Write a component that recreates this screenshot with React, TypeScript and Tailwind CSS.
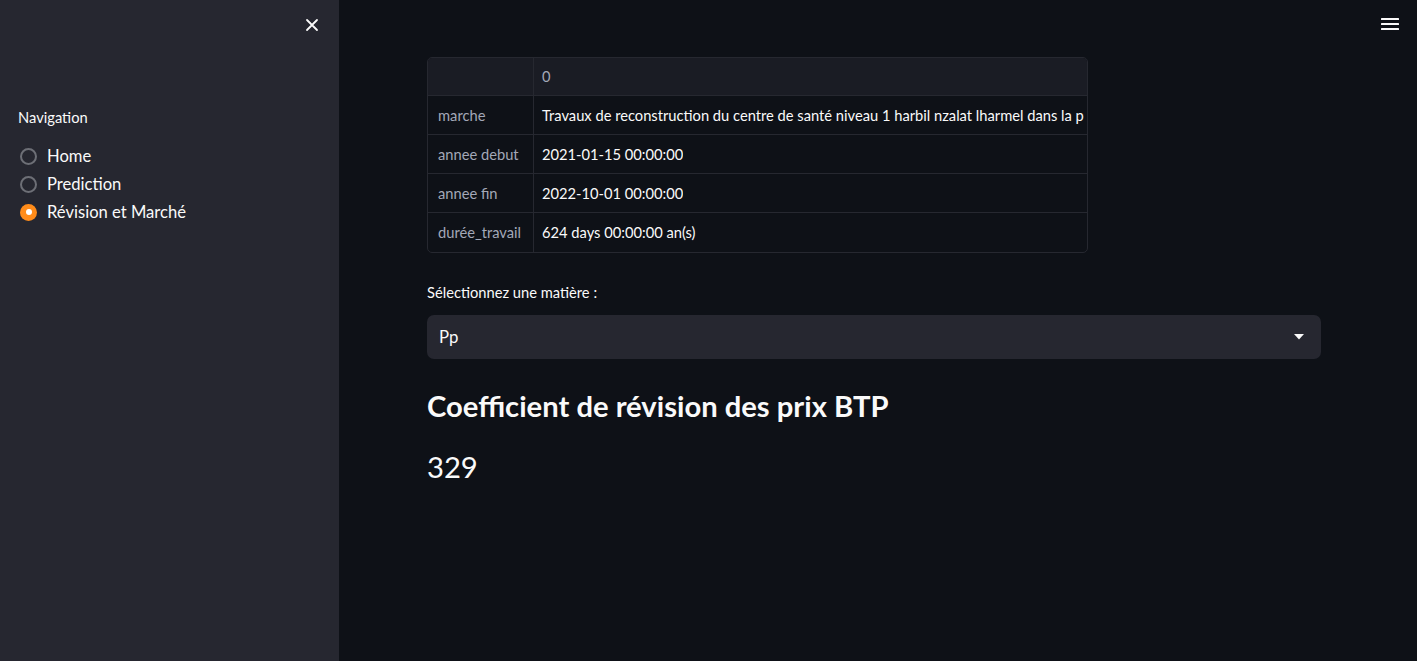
import React from "react";

const font = { fontFamily: '"Source Sans Pro", Lato, "Noto Sans", sans-serif' };

function Radio({ label, selected }: { label: string; selected?: boolean }) {
  return (
    <div className="flex items-center h-[28px]">
      {selected ? (
        <span className="w-[17px] h-[17px] rounded-full bg-[#ff8c1a] flex items-center justify-center ml-[20px]">
          <span className="w-[6px] h-[6px] rounded-full bg-white" />
        </span>
      ) : (
        <span className="w-[17px] h-[17px] rounded-full border-2 border-[#6d6f76] ml-[20px]" />
      )}
      <span className="ml-[10px] text-[16.6px] text-[#fafafa]">{label}</span>
    </div>
  );
}

const rows: [string, string][] = [
  ["marche", "Travaux de reconstruction du centre de santé niveau 1 harbil nzalat lharmel dans la p"],
  ["annee debut", "2021-01-15 00:00:00"],
  ["annee fin", "2022-10-01 00:00:00"],
  ["durée_travail", "624 days 00:00:00 an(s)"],
];

export default function App() {
  return (
    <div className="flex w-[1417px] h-[661px] bg-[#0e1117] overflow-hidden" style={font}>
      <aside className="w-[339px] shrink-0 bg-[#262730] flex flex-col">
        <div className="flex justify-end pt-[17px] pr-[19px]">
          <svg width="16" height="16" viewBox="0 0 16 16" fill="none" stroke="#fafafa" strokeWidth="1.8" strokeLinecap="round">
            <path d="M3 3 L13 13 M13 3 L3 13" />
          </svg>
        </div>
        <div className="mt-[73px] pl-[18px] text-[14.7px] text-[#fafafa]">Navigation</div>
        <div className="mt-[14px] flex flex-col">
          <Radio label="Home" />
          <Radio label="Prediction" />
          <Radio label="Révision et Marché" selected />
        </div>
      </aside>
      <main className="flex-1 flex flex-col relative">
        <div className="absolute right-[18px] top-[17px]">
          <svg width="18" height="14" viewBox="0 0 18 14" fill="#fafafa">
            <rect x="0" y="1" width="18" height="2" rx="0.5" />
            <rect x="0" y="6" width="18" height="2" rx="0.5" />
            <rect x="0" y="11" width="18" height="2" rx="0.5" />
          </svg>
        </div>
        <div className="pl-[88px] pt-[57px] flex flex-col w-[983px]">
          <div className="w-[661px] border border-[#262830] rounded-[5px] overflow-hidden">
            <div className="flex h-[38px] bg-[#1a1c24] border-b border-[#262830] text-[14.7px]">
              <div className="w-[106px] shrink-0 border-r border-[#262830]" />
              <div className="flex items-center pl-[8px] text-[#a3a8b8]">0</div>
            </div>
            {rows.map(([k, v], i) => (
              <div key={k} className={`flex h-[39px] text-[14.7px] ${i < rows.length - 1 ? "border-b border-[#262830]" : ""}`}>
                <div className="w-[106px] shrink-0 border-r border-[#262830] flex items-center pl-[10px] text-[#a3a8b8] whitespace-nowrap">{k}</div>
                <div className="flex items-center pl-[8px] text-[#fafafa] whitespace-nowrap overflow-hidden">{v}</div>
              </div>
            ))}
          </div>
          <div className="mt-[29px] text-[14.7px] text-[#fafafa] h-[20px] leading-[20px]">Sélectionnez une matière :</div>
          <div className="mt-[13px] h-[44px] w-[894px] bg-[#262730] rounded-[7px] flex items-center justify-between pl-[12px] pr-[16px]">
            <span className="text-[16.8px] text-[#fafafa]">Pp</span>
            <svg width="12" height="8" viewBox="0 0 12 8" fill="#fafafa">
              <path d="M1 1 L11 1 L6 6.5 Z" />
            </svg>
          </div>
          <h2 className="mt-[27px] text-[29.2px] font-bold text-[#fafafa] leading-[40px]">Coefficient de révision des prix BTP</h2>
          <div className="mt-[21px] text-[29.2px] text-[#fafafa] leading-[40px]">329</div>
        </div>
      </main>
    </div>
  );
}
